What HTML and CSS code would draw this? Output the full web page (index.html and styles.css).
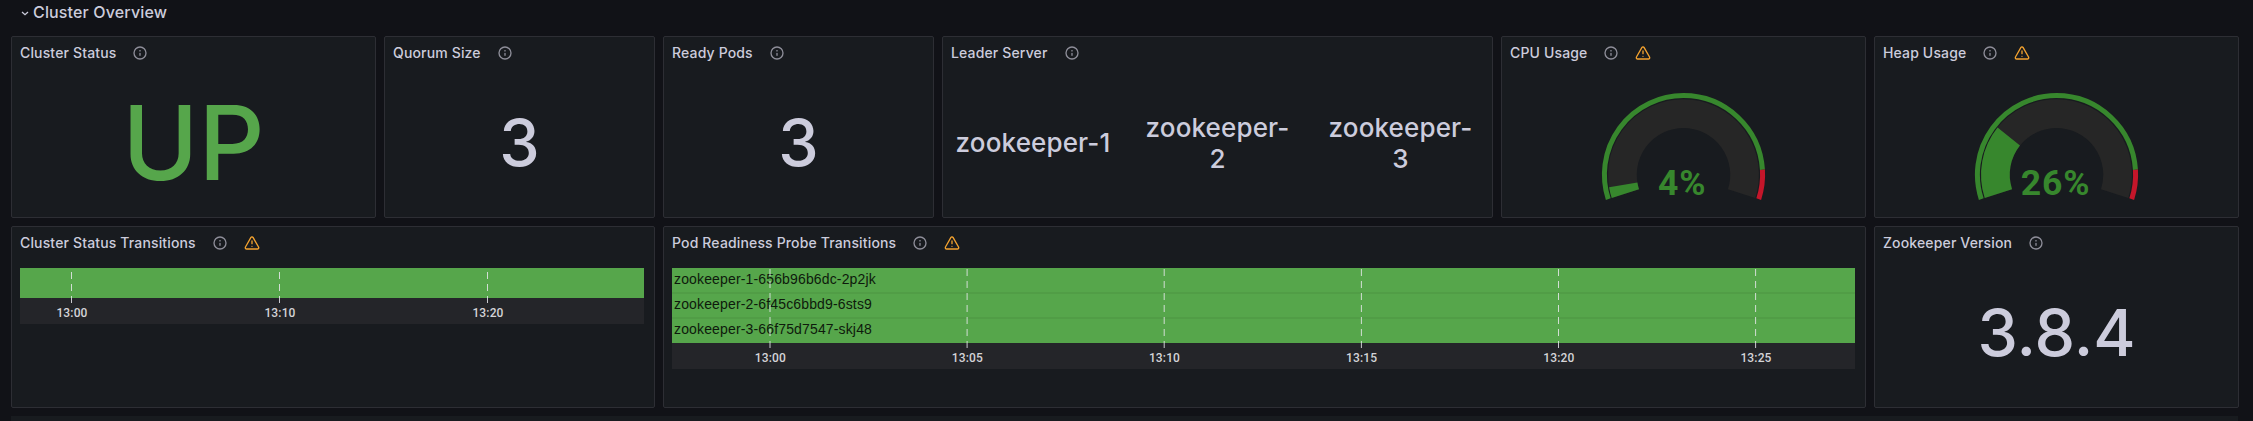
FILE: index.html
```html
<!DOCTYPE html>
<html lang="en">
<head>
<meta charset="utf-8">
<title>Cluster Overview</title>
<link rel="stylesheet" href="styles.css">
</head>
<body>
<svg class="defs" aria-hidden="true">
  <symbol id="info" viewBox="0 0 24 24"><path d="M12,2A10,10,0,1,0,22,12,10.01114,10.01114,0,0,0,12,2Zm0,18a8,8,0,1,1,8-8A8.00917,8.00917,0,0,1,12,20Zm0-8.5a1,1,0,0,0-1,1v3a1,1,0,0,0,2,0v-3A1,1,0,0,0,12,11.5Zm0-4a1.25,1.25,0,1,0,1.25,1.25A1.25,1.25,0,0,0,12,7.5Z"/></symbol>
  <symbol id="warn" viewBox="0 0 24 24"><path d="M12,16a1,1,0,1,0,1,1A1,1,0,0,0,12,16Zm10.67,1.47-8.05-14a3,3,0,0,0-5.24,0l-8,14A3,3,0,0,0,3.94,22H20.06a3,3,0,0,0,2.61-4.53Zm-1.73,2a1,1,0,0,1-.88.51H3.94a1,1,0,0,1-.88-.51,1,1,0,0,1,0-1l8-14a1,1,0,0,1,1.78,0l8.05,14A1,1,0,0,1,20.94,19.49ZM12,8a1,1,0,0,0-1,1v4a1,1,0,0,0,2,0V9A1,1,0,0,0,12,8Z"/></symbol>
</svg>
<main class="dashboard">
  <header class="row-title">
    <svg class="chevron" viewBox="0 0 8 5"><path d="M1 1l3 2.7L7 1"/></svg>
    <h1>Cluster Overview</h1>
  </header>
  <div class="grid">
    <section class="panel">
      <h2>Cluster Status<svg class="icon"><use href="#info"/></svg></h2>
      <div class="stat stat-up">UP</div>
    </section>
    <section class="panel">
      <h2>Quorum Size<svg class="icon"><use href="#info"/></svg></h2>
      <div class="stat">3</div>
    </section>
    <section class="panel">
      <h2>Ready Pods<svg class="icon"><use href="#info"/></svg></h2>
      <div class="stat">3</div>
    </section>
    <section class="panel">
      <h2>Leader Server<svg class="icon"><use href="#info"/></svg></h2>
      <div class="servers"><span>zookeeper-1</span><span>zookeeper-<br>2</span><span>zookeeper-<br>3</span></div>
    </section>
    <section class="panel">
      <h2>CPU Usage<svg class="icon"><use href="#info"/></svg><svg class="icon warn"><use href="#warn"/></svg></h2>
      <svg class="gauge" viewBox="0 0 363 148">
        <path class="track" d="M123.39 124.58A61.1 61.1 0 1 1 239.61 124.58"/>
        <path class="fill" pathLength="100" style="stroke-dasharray: 4 100" d="M123.39 124.58A61.1 61.1 0 1 1 239.61 124.58"/>
        <path class="edge" pathLength="100" d="M106.27 130.14A79.1 79.1 0 1 1 256.73 130.14"/>
        <path class="edge limit" pathLength="100" d="M106.27 130.14A79.1 79.1 0 1 1 256.73 130.14"/>
        <text x="180.2" y="126">4%</text>
      </svg>
    </section>
    <section class="panel">
      <h2>Heap Usage<svg class="icon"><use href="#info"/></svg><svg class="icon warn"><use href="#warn"/></svg></h2>
      <svg class="gauge" viewBox="0 0 363 148">
        <path class="track" d="M123.39 124.58A61.1 61.1 0 1 1 239.61 124.58"/>
        <path class="fill" pathLength="100" style="stroke-dasharray: 26.2 100" d="M123.39 124.58A61.1 61.1 0 1 1 239.61 124.58"/>
        <path class="edge" pathLength="100" d="M106.27 130.14A79.1 79.1 0 1 1 256.73 130.14"/>
        <path class="edge limit" pathLength="100" d="M106.27 130.14A79.1 79.1 0 1 1 256.73 130.14"/>
        <text x="180.5" y="126">26%</text>
      </svg>
    </section>
    <section class="panel wide-2">
      <h2>Cluster Status Transitions<svg class="icon"><use href="#info"/></svg><svg class="icon warn"><use href="#warn"/></svg></h2>
      <svg class="timeline" width="624" height="56">
        <rect class="axis" y="30" width="624" height="26"/>
        <rect class="state" width="624" height="30"/>
        <path class="ticks" d="M51.5 4v31M259.5 4v31M467.5 4v31"/>
        <g class="times"><text x="52" y="49">13:00</text><text x="260" y="49">13:10</text><text x="468" y="49">13:20</text></g>
      </svg>
    </section>
    <section class="panel wide-3">
      <h2>Pod Readiness Probe Transitions<svg class="icon"><use href="#info"/></svg><svg class="icon warn"><use href="#warn"/></svg></h2>
      <svg class="timeline" width="1183" height="101">
        <rect class="axis" y="75" width="1183" height="26"/>
        <rect class="state" width="1183" height="75"/>
        <path class="divider" d="M0 25h1183M0 50h1183"/>
        <g class="names"><text x="2" y="16">zookeeper-1-656b96b6dc-2p2jk</text><text x="2" y="41">zookeeper-2-6f45c6bbd9-6sts9</text><text x="2" y="66">zookeeper-3-66f75d7547-skj48</text></g>
        <path class="ticks" d="M98 1v79M295.1 1v79M492.2 1v79M689.4 1v79M886.5 1v79M1083.6 1v79"/>
        <g class="times"><text x="98.3" y="94">13:00</text><text x="295.4" y="94">13:05</text><text x="492.5" y="94">13:10</text><text x="689.7" y="94">13:15</text><text x="886.9" y="94">13:20</text><text x="1084" y="94">13:25</text></g>
      </svg>
    </section>
    <section class="panel">
      <h2>Zookeeper Version<svg class="icon"><use href="#info"/></svg></h2>
      <div class="stat">3.8.4</div>
    </section>
  </div>
  <div class="next-row"></div>
</main>
</body>
</html>
```
FILE: styles.css
```css
* { box-sizing: border-box; }
body { margin: 0; background: #111217; color: #ccccdc; font-family: Inter, sans-serif; height: 421px; overflow: hidden; }
.dashboard { width: 2253px; }
.defs { display: none; }
.row-title { height: 36px; display: flex; padding-left: 21px; gap: 4px; }
.row-title h1 { margin: 0; font-size: 16px; font-weight: 500; line-height: 25px; letter-spacing: .15px; }
.chevron { width: 8px; height: 5px; margin-top: 11px; fill: none; stroke: #ccccdc; stroke-width: 1.3; }
.grid { display: grid; margin-left: 11px; grid-template-columns: 365px 271px 271px 551px 365px 365px; grid-auto-rows: 182px; gap: 8px; }
.panel { display: flex; flex-direction: column; background: #181b1f; border: 1px solid #2d2e34; border-radius: 2px; }
.panel h2 { margin: 0; padding: 0 0 1px 8px; height: 32px; display: flex; align-items: center; font-size: 14px; font-weight: 500; letter-spacing: .15px; }
.icon { width: 16px; height: 16px; fill: #8e8e99; margin-left: 16px; }
.warn { fill: #f5a32f; }
.wide-2 { grid-column: span 2; }
.wide-3 { grid-column: span 3; }
.stat { flex: 1; display: flex; align-items: center; justify-content: center; font-size: 64.5px; font-weight: 500; padding-bottom: 1px; }
.stat-up { font-size: 103px; color: #56a64b; padding-bottom: 2px; }
.servers { flex: 1; display: grid; grid-template-columns: repeat(3, 1fr); align-items: center; text-align: center; font-size: 26px; font-weight: 500; line-height: 31px; letter-spacing: .15px; padding-bottom: 1px; }
.servers span:first-child { margin-right: 3px; }
.gauge { width: 363px; height: 148px; fill: none; }
.track { stroke: #262626; stroke-width: 28.7; }
.fill { stroke: #37872d; stroke-width: 28.7; }
.edge { stroke: #37872d; stroke-width: 5; stroke-dasharray: 90 100; }
.limit { stroke: #c4162a; stroke-dasharray: 0 90 10 0; }
.gauge text { fill: #37872d; font: bold 35.5px Roboto, sans-serif; letter-spacing: .8px; text-anchor: middle; }
.timeline { margin: 9px 0 0 8px; }
.axis { fill: #242529; }
.state { fill: #56a64b; }
.divider { stroke: #519d46; stroke-width: 2; }
.ticks { stroke: rgba(232, 232, 236, .85); stroke-dasharray: 7 5; }
.times { fill: #d4d4d8; font: 500 12px Roboto, sans-serif; letter-spacing: .15px; text-anchor: middle; }
.names { fill: #0e1a0c; font: 14px "Liberation Sans", sans-serif; letter-spacing: .15px; }
.next-row { margin: 8px 0 0 11px; width: 2227px; height: 5px; background: #181b1f; }
```
